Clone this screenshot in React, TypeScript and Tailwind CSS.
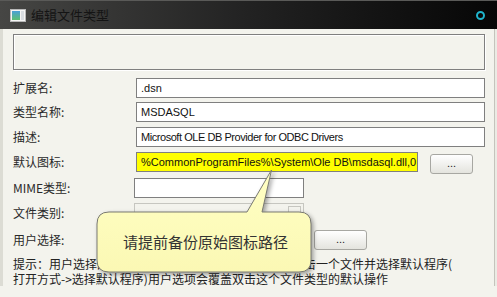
import React from 'react';

const cjk = { fontFamily: '"Noto Sans CJK SC", "Noto Sans", sans-serif' };
const latin = { fontFamily: '"Liberation Sans", "Noto Sans CJK SC", sans-serif' };

const Field: React.FC<{ value?: string; className?: string }> = ({ value, className = '' }) => (
  <div
    className={`h-[20px] border border-[#7f7f7f] bg-white pl-[4px] text-[11px] leading-[18px] text-[#111] whitespace-nowrap overflow-hidden ${className}`}
    style={latin}
  >
    {value}
  </div>
);

const DotsButton: React.FC<{ className?: string }> = ({ className = '' }) => (
  <div
    className={`h-[20px] rounded-[3px] border border-[#a7a7a2] bg-gradient-to-b from-[#ffffff] to-[#e4e4de] text-center text-[11px] leading-[16px] text-[#222] ${className}`}
    style={latin}
  >
    ...
  </div>
);

const Row: React.FC<{ label: string; className?: string; children: React.ReactNode }> = ({ label, className = '', children }) => (
  <div className={`flex items-center ${className}`}>
    <div className="w-[121px] shrink-0 text-[12px] text-[#2a2a2a]" style={cjk}>
      {label}
    </div>
    {children}
  </div>
);

export default function App() {
  return (
    <div className="relative h-[297px] w-[497px] overflow-hidden bg-[#f3f3ed]">
      {/* title bar */}
      <div className="flex h-[29px] items-center bg-gradient-to-r from-[#464644] via-[#222222] to-[#070707] border-t border-[#5a5a58]">
        <svg width="16" height="13" viewBox="0 0 16 13" className="ml-[10px]">
          <rect x="0.5" y="0.5" width="15" height="12" fill="#f4f4f4" stroke="#b8b8b8" />
          <defs>
            <linearGradient id="ig" x1="0" y1="0" x2="0" y2="1">
              <stop offset="0" stopColor="#4aa0d8" />
              <stop offset="1" stopColor="#5cc070" />
            </linearGradient>
          </defs>
          <rect x="2" y="2" width="8" height="9" fill="url(#ig)" />
          <rect x="11" y="2" width="3" height="9" fill="#d8dce0" />
        </svg>
        <div className="ml-[5px] text-[13px] text-[#141414]" style={cjk}>
          编辑文件类型
        </div>
        <div className="ml-auto mr-[12px] h-[9px] w-[9px] rounded-full border-2 border-[#1fb4cc]" />
      </div>

      <div className="flex">
        <div className="w-[3px] self-stretch bg-[#dcdcd4]" />
        <div className="flex-1 pl-[10px] pr-[9px]">
          <div className="mt-[5px] h-[36px] border border-[#7f7f7f] shadow-[inset_1px_1px_0_#ffffff,1px_1px_0_#ffffff]" />

          <Row label="扩展名:" className="mt-[8px]">
            <Field value=".dsn" className="ml-[2px] flex-1" />
          </Row>
          <Row label="类型名称:" className="mt-[4px]">
            <Field value="MSDASQL" className="ml-[2px] flex-1" />
          </Row>
          <Row label="描述:" className="mt-[5px]">
            <Field value="Microsoft OLE DB Provider for ODBC Drivers" className="ml-[2px] flex-1 tracking-[-0.45px]" />
          </Row>
          <Row label="默认图标:" className="mt-[3px]">
            <Field
              value="%CommonProgramFiles%\System\Ole DB\msdasql.dll,0"
              className="ml-[2px] w-[282px] !bg-[#ffff00]"
            />
            <DotsButton className="ml-[12px] mt-[4px] w-[43px]" />
          </Row>
          <Row label="MIME类型:" className="mt-[4px]">
            <Field className="w-[170px]" />
          </Row>
          <Row label="文件类别:" className="mt-[5px]">
            <div className="relative h-[20px] w-[170px] border border-[#c6c6c0] bg-[#f3f3ed]">
              <div className="absolute right-[2px] top-[2px] h-[14px] w-[13px] border border-[#c6c6c0]" />
            </div>
          </Row>
          <Row label="用户选择:" className="mt-[7px]">
            <DotsButton className="ml-[180px] w-[53px]" />
          </Row>

          <div className="mt-[6px] text-[12px] leading-[15px] text-[#222] whitespace-nowrap" style={cjk}>
            提示：用户选择的项等同于在Windows资源管理器中右击一个文件并选择默认程序(
            <br />
            打开方式-&gt;选择默认程序)用户选项会覆盖双击这个文件类型的默认操作
          </div>
        </div>
        <div className="w-[3px] self-stretch border-l border-[#c4c4bc] bg-[#ebebe4]" />
      </div>

      {/* balloon tip */}
      <svg
        width="220"
        height="110"
        viewBox="0 0 220 110"
        className="absolute left-[95px] top-[168px] drop-shadow-[2px_2px_2px_rgba(0,0,0,0.35)]"
      >
        <defs>
          <linearGradient id="tip" x1="0" y1="0" x2="0" y2="1">
            <stop offset="0" stopColor="#ffffc4" />
            <stop offset="1" stopColor="#fbf8b4" />
          </linearGradient>
        </defs>
        <path
          d="M14 44 L152 44 L176.5 2 L167 44 L204 44 Q216 44 216 56 L216 92 Q216 104 204 104 L14 104 Q2 104 2 92 L2 56 Q2 44 14 44 Z"
          fill="url(#tip)"
          stroke="#7a7a72"
          strokeWidth="1"
        />
      </svg>
      <div className="absolute left-[123px] top-[232px] text-[15px] leading-[20px] text-[#333]" style={cjk}>
        请提前备份原始图标路径
      </div>
    </div>
  );
}
